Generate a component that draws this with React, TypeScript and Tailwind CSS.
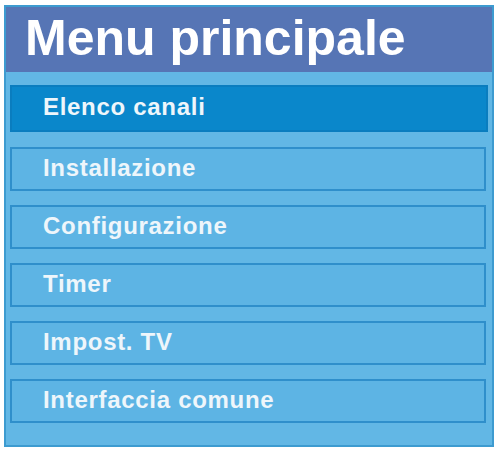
const items = [
    "Installazione",
    "Configurazione",
    "Timer",
    "Impost. TV",
    "Interfaccia comune",
];

export default function App() {
    return (
        <div className="w-[498px] h-[451px] bg-white pt-[5px] pl-[4px] font-['Liberation_Sans',Arial,sans-serif]">
            <div className="w-[490px] h-[442px] border-2 border-[#3d9bd0] bg-[#62b7e5] flex flex-col">
                {/* title bar */}
                <div className="h-[65px] bg-[#5675b5] pt-[6px] pl-[19px] text-[50px] leading-none font-bold text-white">
                    Menu principale
                </div>

                <div className="flex flex-col px-[4px] pt-[13px]">
                    <div className="h-[47px] bg-[#0a87cb] border-2 border-[#0a7dbf] flex items-center pl-[31px] pb-[3px] text-[24px] font-bold tracking-[0.7px] text-[#eef6fb]">
                        Elenco canali
                    </div>
                    <div className="flex flex-col gap-[14px] mt-[15px] pr-[2px]">
                        {items.map((label, i) => (
                            <div
                                key={i}
                                className="h-[44px] bg-[#5db4e4] border-2 border-[#2f8fcb] flex items-center pl-[31px] pb-[3px] text-[24px] font-bold tracking-[0.7px] text-[#eef6fb]"
                            >
                                {label}
                            </div>
                        ))}
                    </div>
                </div>
            </div>
        </div>
    );
}
